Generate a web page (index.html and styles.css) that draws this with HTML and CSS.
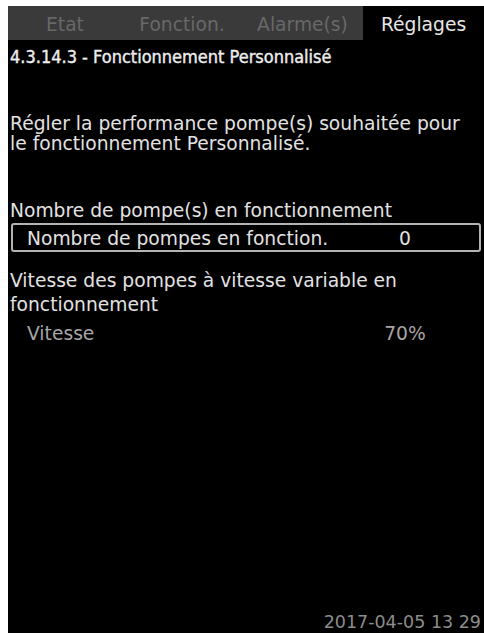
FILE: index.html
```html
<!DOCTYPE html>
<html lang="fr">
<head>
<meta charset="utf-8">
<title>Réglages</title>
<link rel="stylesheet" href="styles.css">
</head>
<body>
<div class="screen">
  <div class="tabs">
    <div class="tab">Etat</div>
    <div class="tab">Fonction.</div>
    <div class="tab">Alarme(s)</div>
    <div class="tab tab-active">Réglages</div>
  </div>
  <div class="title">4.3.14.3 - Fonctionnement Personnalisé</div>
  <p class="para">Régler la performance pompe(s) souhaitée pour le fonctionnement Personnalisé.</p>
  <div class="label label-first">Nombre de pompe(s) en fonctionnement</div>
  <div class="row row-selected">
    <span class="row-label">Nombre de pompes en fonction.</span>
    <span class="row-value">0</span>
  </div>
  <div class="label label-second">Vitesse des pompes à vitesse variable en fonctionnement</div>
  <div class="row row-dim">
    <span class="row-label">Vitesse</span>
    <span class="row-value">70%</span>
  </div>
  <div class="date">2017-04-05 13 29</div>
</div>
</body>
</html>
```
FILE: styles.css
```css
html, body {
  margin: 0;
  padding: 0;
  background: #ffffff;
}

.screen {
  margin: 6px 0 0 8px;
  width: 476px;
  height: 627px;
  background: #000000;
  display: flex;
  flex-direction: column;
  font-family: "DejaVu Sans", sans-serif;
  font-size: 18.7px;
  color: #e2e2e2;
}

.tabs {
  display: grid;
  grid-template-columns: 114px 120px 121px 121px;
  height: 34px;
}

.tab {
  background: #3a3a3a;
  color: #686868;
  text-align: center;
  padding-top: 4px;
  line-height: 30px;
  white-space: nowrap;
}

.tab-active {
  background: #000000;
  color: #e6e6e6;
}

.title {
  margin-top: 7px;
  padding-left: 2px;
  font-family: "DejaVu Sans Condensed", "DejaVu Sans", sans-serif;
  font-size: 18px;
  line-height: 20px;
  color: #ededed;
  -webkit-text-stroke: 0.4px #ededed;
  white-space: nowrap;
}

.para {
  margin: 47px 0 0 0;
  padding-left: 2px;
  line-height: 20px;
  width: 470px;
}

.label {
  padding-left: 2px;
  white-space: normal;
}

.label-first {
  margin-top: 47px;
  line-height: 20px;
}

.label-second {
  margin-top: 17px;
  line-height: 24px;
  width: 420px;
}

.row {
  margin: 0 3px;
  height: 25px;
  padding-top: 2px;
  line-height: 23px;
  border: 2px solid transparent;
  border-radius: 3px;
  display: grid;
  grid-template-columns: 1fr 60px;
  padding-right: 44px;
  padding-left: 14px;
  box-sizing: content-box;
}

.row-selected {
  margin-top: 2px;
  border-color: #b4b4b4;
  height: 23px;
}

.row-dim {
  margin-top: 1px;
  color: #a6a6a6;
}

.row-value {
  text-align: center;
}

.date {
  margin-top: auto;
  padding-right: 3px;
  padding-bottom: 1px;
  text-align: right;
  font-size: 17.5px;
  line-height: 20px;
  color: #8c8c8c;
}
```
